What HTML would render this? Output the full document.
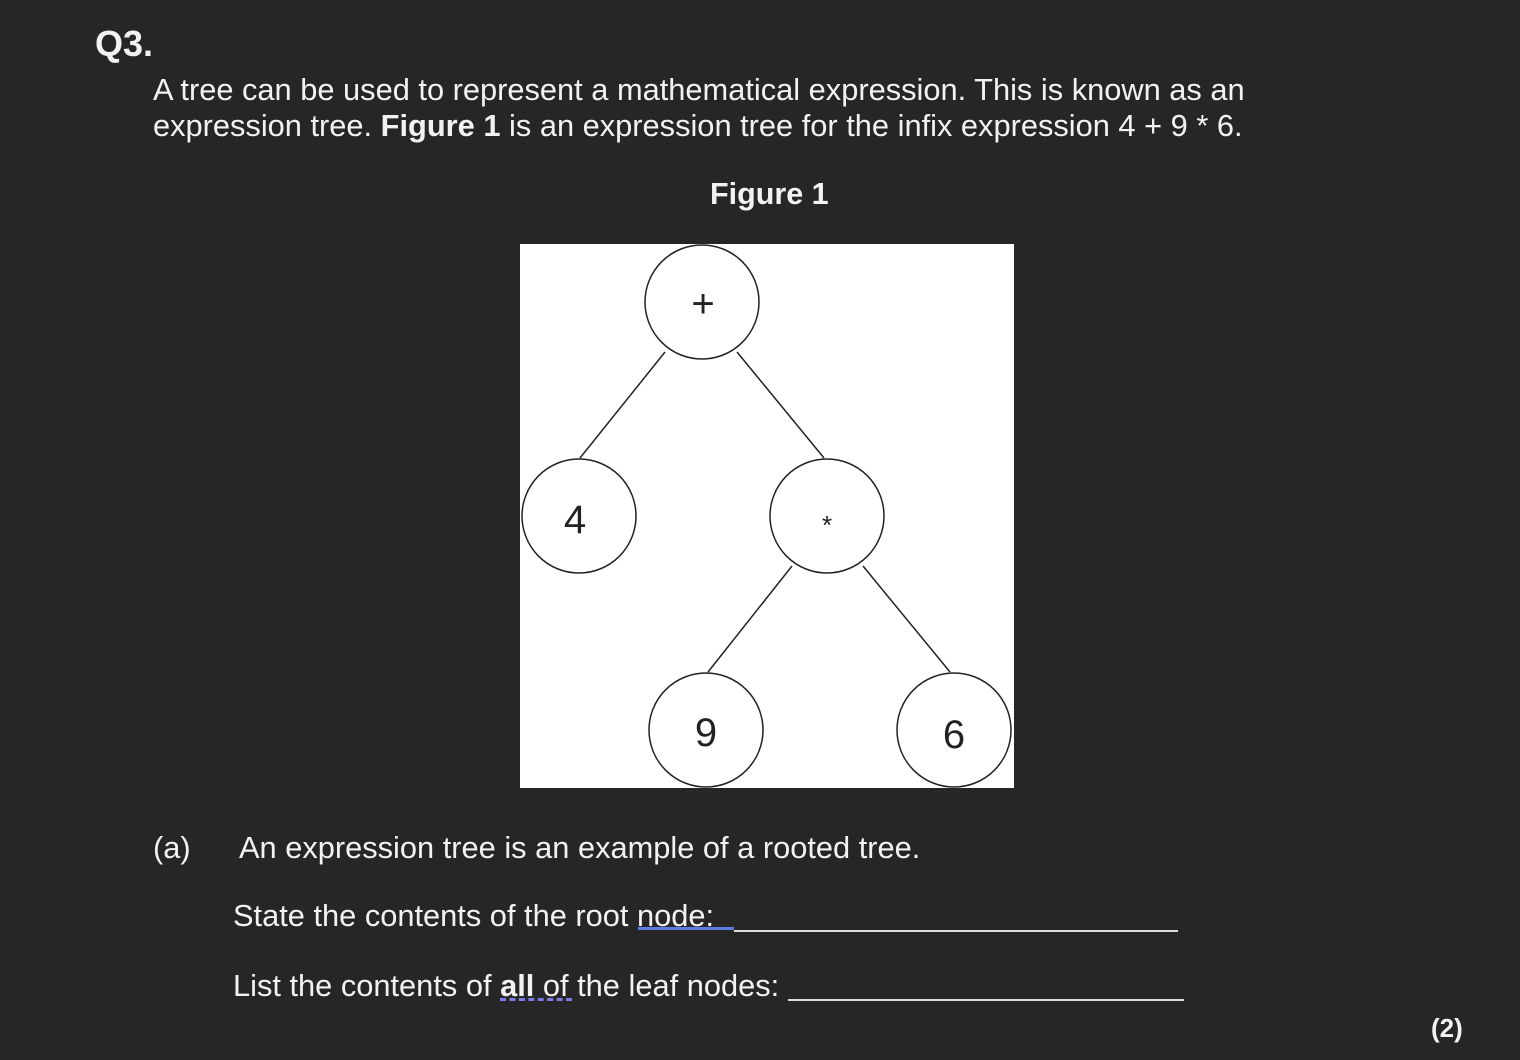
<!DOCTYPE html>
<html><head><style>
body{margin:0;width:1520px;height:1060px;background:#262626;color:#f2f2f2;font-family:"Liberation Sans",Arial,sans-serif;position:relative;overflow:hidden}
.t{position:absolute;white-space:nowrap;font-size:30.8px;line-height:36px}
b{font-weight:bold}
</style></head><body>
<div class="t" style="left:95px;top:26px;font-size:36px;font-weight:bold">Q3.</div>
<div class="t" style="left:153px;top:72px">A tree can be used to represent a mathematical expression. This is known as an</div>
<div class="t" style="left:153px;top:108px">expression tree. <b>Figure 1</b> is an expression tree for the infix expression 4 + 9 * 6.</div>
<div class="t" style="left:710px;top:176px;font-weight:bold;font-size:30.5px">Figure 1</div>
<svg style="position:absolute;left:520px;top:244px" width="494" height="544" viewBox="520 244 494 544">
<rect x="520" y="244" width="494" height="544" fill="#fff"/>
<g stroke="#222" stroke-width="1.5" fill="none">
<line x1="665" y1="352" x2="580" y2="458"/>
<line x1="737" y1="352" x2="824" y2="458"/>
<line x1="792" y1="566" x2="708" y2="672"/>
<line x1="863" y1="566" x2="950" y2="672"/>
<circle cx="702" cy="302" r="57"/>
<circle cx="579" cy="516" r="57"/>
<circle cx="827" cy="516" r="57"/>
<circle cx="706" cy="730" r="57"/>
<circle cx="954" cy="730" r="57"/>
</g>
<g fill="#222" font-family="Liberation Sans,Arial,sans-serif" font-size="40" text-anchor="middle">
<text x="703" y="317">+</text>
<text x="575" y="533">4</text>
<text x="827" y="534" font-size="26">*</text>
<text x="706" y="746">9</text>
<text x="954" y="748">6</text>
</g>
</svg>
<div class="t" style="left:153px;top:830px">(a)</div>
<div class="t" style="left:239px;top:830px">An expression tree is an example of a rooted tree.</div>
<div class="t" style="left:233px;top:898px">State the contents of the root node:</div>
<div style="position:absolute;left:638px;top:927px;width:96px;height:3px;background:#5b7fe0"></div>
<div style="position:absolute;left:734px;top:930px;width:444px;height:2px;background:#ddd"></div>
<div class="t" style="left:233px;top:968px">List the contents of <b>all</b> of the leaf nodes:</div>
<div style="position:absolute;left:500px;top:998px;width:72px;border-top:3px dashed #7a7ae8"></div>
<div style="position:absolute;left:788px;top:999px;width:396px;height:2px;background:#ddd"></div>
<div class="t" style="left:1431px;top:1010px;font-size:26px;font-weight:bold">(2)</div>
</body></html>
